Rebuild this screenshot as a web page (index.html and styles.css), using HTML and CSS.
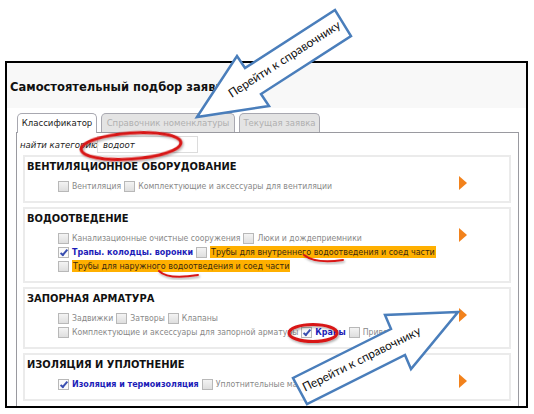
FILE: index.html
```html
<!DOCTYPE html>
<html lang="ru">
<head>
<meta charset="utf-8">
<title>Самостоятельный подбор заявки</title>
<link rel="stylesheet" href="styles.css">
</head>
<body>
<div class="page">
  <div class="frame">
    <div class="head"><h1 class="title">Самостоятельный подбор заявки</h1></div>
    <div class="content">
      <div class="tabs">
        <div class="tab tab-1 active">Классификатор</div>
        <div class="tab tab-2">Справочник номенклатуры</div>
        <div class="tab tab-3">Текущая заявка</div>
      </div>
      <div class="panel">
        <div class="search">
          <span class="search-label">найти категорию</span>
          <div class="search-input">водоот</div>
        </div>

        <div class="section">
          <div class="sec-body">
            <div class="sec-title">ВЕНТИЛЯЦИОННОЕ ОБОРУДОВАНИЕ</div>
            <div class="items">
              <div class="line">
                <span class="item"><i class="cb"></i>Вентиляция</span>
                <span class="item"><i class="cb"></i>Комплектующие и аксессуары для вентиляции</span>
              </div>
            </div>
          </div>
          <div class="sec-arrow"><i class="tri"></i></div>
        </div>

        <div class="section">
          <div class="sec-body">
            <div class="sec-title">ВОДООТВЕДЕНИЕ</div>
            <div class="items">
              <div class="line">
                <span class="item"><i class="cb"></i>Канализационные очистные сооружения</span>
                <span class="item"><i class="cb"></i>Люки и дождеприемники</span>
              </div>
              <div class="line">
                <span class="item sel"><i class="cb on"></i>Трапы. колодцы. воронки</span>
                <span class="item"><i class="cb"></i><span class="hl">Трубы для внутреннего водоотведения и соед части</span></span>
              </div>
              <div class="line">
                <span class="item"><i class="cb"></i><span class="hl">Трубы для наружного водоотведения и соед части</span></span>
              </div>
            </div>
          </div>
          <div class="sec-arrow"><i class="tri"></i></div>
        </div>

        <div class="section">
          <div class="sec-body">
            <div class="sec-title">ЗАПОРНАЯ АРМАТУРА</div>
            <div class="items">
              <div class="line">
                <span class="item"><i class="cb"></i>Задвижки</span>
                <span class="item"><i class="cb"></i>Затворы</span>
                <span class="item"><i class="cb"></i>Клапаны</span>
              </div>
              <div class="line">
                <span class="item"><i class="cb"></i>Комплектующие и аксессуары для запорной арматуры</span>
                <span class="item sel"><i class="cb on"></i>Краны</span>
                <span class="item"><i class="cb"></i>Приводы</span>
              </div>
            </div>
          </div>
          <div class="sec-arrow"><i class="tri"></i></div>
        </div>

        <div class="section">
          <div class="sec-body">
            <div class="sec-title">ИЗОЛЯЦИЯ И УПЛОТНЕНИЕ</div>
            <div class="items">
              <div class="line">
                <span class="item sel"><i class="cb on"></i>Изоляция и термоизоляция</span>
                <span class="item"><i class="cb"></i>Уплотнительные материалы</span>
              </div>
            </div>
          </div>
          <div class="sec-arrow"><i class="tri"></i></div>
        </div>
      </div>
    </div>
  </div>

  <svg class="annot" width="534" height="414" viewBox="0 0 534 414">
    <defs>
      <filter id="sh" x="-20%" y="-50%" width="140%" height="200%">
        <feDropShadow dx="1" dy="1.5" stdDeviation="1" flood-color="#000" flood-opacity="0.35"/>
      </filter>
    </defs>
    <ellipse cx="131" cy="146" rx="50" ry="13" transform="rotate(-4 131 146)" fill="none" stroke="#d81818" stroke-width="3" filter="url(#sh)"/>
    <ellipse cx="313" cy="333" rx="24" ry="8.5" fill="none" stroke="#d81818" stroke-width="3" filter="url(#sh)"/>
    <path d="M159 271 Q168 280 198 275" fill="none" stroke="#d81818" stroke-width="2" stroke-linecap="round" filter="url(#sh)"/>
    <path d="M304 255 Q315 264 343 260" fill="none" stroke="#d81818" stroke-width="2" stroke-linecap="round" filter="url(#sh)"/>

    <polygon points="197,117 237,56 245,68 335,10 351,36 261,94 269,106" fill="#fff" stroke="#4a7ebb" stroke-width="2.5" stroke-linejoin="miter"/>
    <text class="arrow-text" x="285" y="60" transform="rotate(-32.8 285 60)" text-anchor="middle" dominant-baseline="middle">Перейти к справочнику</text>

    <polygon points="458,312 385,315 391,329 293,378 307,404 405,355 411,369" fill="#fff" stroke="#4a7ebb" stroke-width="2.5" stroke-linejoin="miter"/>
    <text class="arrow-text" x="362" y="360" transform="rotate(-26.5 362 360)" text-anchor="middle" dominant-baseline="middle">Перейти к справочнику</text>
  </svg>
</div>
</body>
</html>
```

FILE: styles.css
```css
html, body {
  margin: 0;
  background: #fff;
}
body {
  font-family: "DejaVu Sans Condensed", "DejaVu Sans", Verdana, sans-serif;
  color: #222;
}
.page {
  position: relative;
  width: 534px;
  height: 414px;
  padding: 61px 0 0 5px;
  box-sizing: border-box;
  overflow: hidden;
}
.frame {
  width: 519px;
  height: 343px;
  border: 2px solid #000;
  overflow: hidden;
  background: #fff;
}
.head {
  height: 45px;
  box-sizing: border-box;
  padding: 16px 0 0 3px;
  background: #f8f8f8;
}
.title {
  margin: 0;
  font-size: 12.8px;
  line-height: 16px;
  font-weight: bold;
  color: #111;
  white-space: nowrap;
}
.content {
  padding: 5px 7px 0 9px;
}
.tabs {
  display: flex;
  align-items: flex-start;
  gap: 4px;
  height: 19px;
  padding-left: 1px;
}
.tab {
  height: 19px;
  box-sizing: border-box;
  border: 1px solid #a8a8b0;
  border-bottom: none;
  border-radius: 5px 5px 0 0;
  background: #e4e4e4;
  color: #b0b0b0;
  font-size: 9.5px;
  line-height: 18px;
  text-align: center;
  white-space: nowrap;
}
.tab.active {
  height: 20px;
  position: relative;
  z-index: 2;
  background: #fff;
  color: #222;
}
.tab-1 { width: 80px; }
.tab-2 { width: 134px; }
.tab-3 { width: 81px; }
.panel {
  height: 300px;
  border: 1px solid #9a9aa0;
  border-bottom: none;
  padding: 3px 7px 0 3px;
  background: #fff;
}
.search {
  display: flex;
  align-items: center;
  height: 17px;
}
.search-label {
  width: 77px;
  font-size: 9.5px;
  font-style: italic;
  color: #222;
  white-space: nowrap;
}
.search-input {
  width: 101px;
  height: 17px;
  box-sizing: border-box;
  border: 1px solid #dcdcdc;
  padding-left: 5px;
  font-size: 9.5px;
  line-height: 15px;
  font-style: italic;
  color: #222;
}
.section {
  display: flex;
  margin: 4px 0 0 3px;
  border: 2px solid #ebebeb;
  background: #fff;
}
.search + .section {
  margin-top: 2px;
}
.sec-body {
  flex: 1;
  padding: 3px 2px 8px;
}
.sec-title {
  font-size: 11px;
  line-height: 14px;
  font-weight: bold;
  color: #111;
  white-space: nowrap;
}
.items {
  margin-top: 5px;
  padding-left: 31px;
}
.line {
  display: flex;
  align-items: center;
  height: 14px;
  white-space: nowrap;
}
.item {
  display: inline-flex;
  align-items: center;
  margin-right: 3px;
  font-size: 8.6px;
  color: #888;
}
.item.sel {
  font-size: 8.9px;
  font-weight: bold;
  color: #1c1cb8;
}
.cb {
  display: inline-block;
  position: relative;
  width: 9px;
  height: 9px;
  margin-right: 3px;
  border: 1px solid #b8b8b8;
  background: linear-gradient(#f4f4f4, #dedede);
}
.cb.on {
  background: #fafafa;
}
.cb.on::after {
  content: "";
  position: absolute;
  left: 3px;
  top: 0px;
  width: 2px;
  height: 6px;
  border: solid #3a4fb0;
  border-width: 0 2px 2px 0;
  transform: rotate(40deg);
}
.hl {
  background: #ffb000;
  color: #3a2a10;
  padding: 1px 1px;
  font-size: 8.9px;
}
.sec-arrow {
  width: 50px;
  padding-top: 19px;
}
.tri {
  display: block;
  width: 0;
  height: 0;
  border-top: 7px solid transparent;
  border-bottom: 7px solid transparent;
  border-left: 8px solid #f2821c;
}
.annot {
  position: absolute;
  left: 0;
  top: 0;
  pointer-events: none;
}
.arrow-text {
  font-family: Lato, "Liberation Sans", sans-serif;
  font-size: 12px;
  fill: #111;
}
```
